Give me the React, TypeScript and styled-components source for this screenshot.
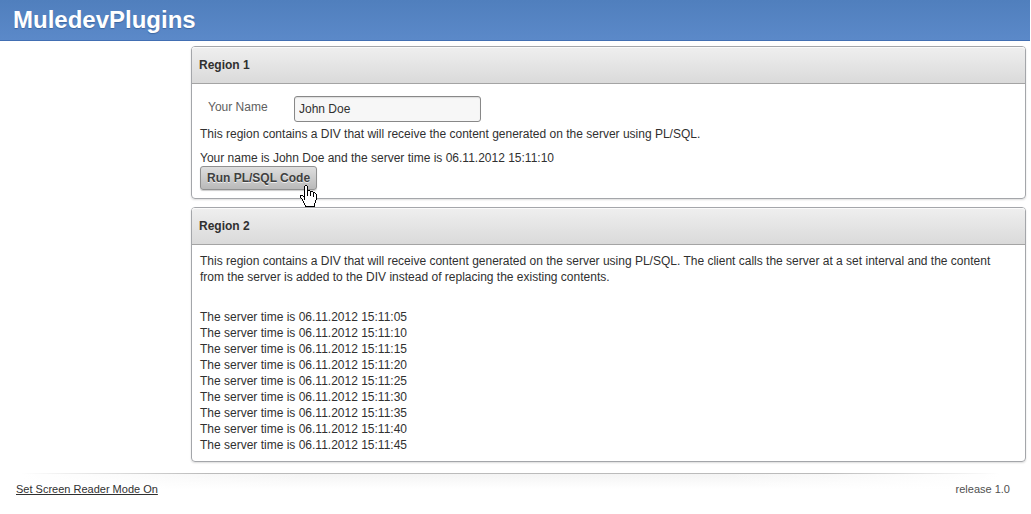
import React from "react";
import styled, { createGlobalStyle } from "styled-components";

const GlobalStyle = createGlobalStyle`
  *, *::before, *::after { box-sizing: border-box; }
  body {
    margin: 0;
    background: #fff;
    color: #303030;
    font: 12px/16px "Liberation Sans", Arial, sans-serif;
  }
  p, h1, h2, ul { margin: 0; padding: 0; }
`;

const Banner = styled.header`
  height: 41px;
  margin-right: 1px;
  padding: 6px 13px;
  background: linear-gradient(#507fbd, #5b89c9);
  border-bottom: 1px solid #426fb3;
`;

const Logo = styled.h1`
  color: #fff;
  font-size: 24px;
  line-height: 28px;
  text-shadow: 0 1px 1px #3c66a0;
`;

const Main = styled.main`
  display: flex;
  flex-direction: column;
  gap: 8px;
  margin: 5px 5px 0 191px;
`;

const Panel = styled.section`
  border: 1px solid #a4a6aa;
  border-radius: 4px;
  box-shadow: 0 1px 2px #dcdcdc;
`;

const PanelTitle = styled.h2`
  height: 37px;
  padding: 0 7px;
  border-bottom: 1px solid #a4a4a4;
  border-radius: 3px 3px 0 0;
  background: linear-gradient(#efefef, #dadada);
  box-shadow: inset 0 1px 0 #fafafa;
  font-size: 12px;
  line-height: 36px;
`;

const PanelBody = styled.div`
  padding: 8px;
`;

const Field = styled.div`
  display: flex;
  padding: 4px 8px;
`;

const Label = styled.label`
  width: 86px;
  padding-top: 3px;
  color: #606060;
`;

const TextInput = styled.input`
  width: 187px;
  height: 26px;
  padding: 0 4px;
  border: 1px solid #888;
  border-radius: 3px;
  background: #f7f7f7;
  box-shadow: inset 0 1px 1px #ddd;
  color: #303030;
  font: inherit;
`;

const Result = styled.p`
  padding-top: 8px;
`;

const RunButton = styled.button`
  display: block;
  position: relative;
  height: 24px;
  padding: 0 6px;
  border: 1px solid #909090;
  border-radius: 3px;
  background: linear-gradient(#dedede, #b9b9b9);
  box-shadow: 0 1px 1px #ccc;
  color: #404040;
  font: bold 12px/20px "Liberation Sans", Arial, sans-serif;
  text-shadow: 0 1px 0 #eee;
`;

const Pointer = styled.svg`
  position: absolute;
  top: 18px;
  right: -1px;
`;

const Log = styled.ul`
  padding-top: 24px;
  list-style: none;
`;

const Footer = styled.footer`
  position: relative;
  display: flex;
  justify-content: space-between;
  margin-top: 11px;
  padding: 8px 21px 8px 16px;
  font-size: 11px;
  background: linear-gradient(90deg, #fff 2%, transparent 30%, transparent 70%, #fff 97%),
    linear-gradient(#f3f3f3, #fff 16px);
`;

const FooterLine = styled.div`
  position: absolute;
  top: 0;
  left: 0;
  right: 0;
  height: 1px;
  background: linear-gradient(90deg, #fff 2%, #bbb 20%, #bbb 80%, #fff 97%);
`;

const FooterLink = styled.a`
  color: #303030;
`;

const Release = styled.span`
  color: #505050;
`;

const seconds = ["05", "10", "15", "20", "25", "30", "35", "40", "45"];

// One character per pixel: "#" outline, "o" fill.
const handRows = [
  "     ##",
  "    #oo#",
  "    #oo#",
  "    #oo#",
  "    #oo#",
  "    #oo###",
  "    #oo#oo###",
  "    #oo#oo#oo##",
  "    #oo#oo#oo#o#",
  "    #oo#oo#oo#oo#",
  "### #oo#oo#oo#oo#",
  "#oo##oooooooo#oo#",
  "#ooo#ooooooooooo#",
  " #oo#ooooooooooo#",
  "  #o#ooooooooooo#",
  "  #oooooooooooo#",
  "   #ooooooooooo#",
  "   #ooooooooooo#",
  "    #ooooooooo#",
  "    #ooooooooo#",
  "     #oooooooo#",
  "     ##########",
];

const pixels = (mark: string) =>
  handRows
    .flatMap((row, y) =>
      [...row].map((c, x) => (c === mark ? `M${x} ${y}h1v1h-1z` : ""))
    )
    .join("");

function HandPointer() {
  return (
    <Pointer
      width="17"
      height="22"
      viewBox="0 0 17 22"
      shapeRendering="crispEdges"
      aria-hidden="true"
    >
      <path d={pixels("o")} fill="#fff" />
      <path d={pixels("#")} fill="#000" />
    </Pointer>
  );
}

export default function App() {
  return (
    <>
      <GlobalStyle />
      <Banner>
        <Logo>MuledevPlugins</Logo>
      </Banner>
      <Main>
        <Panel>
          <PanelTitle>Region 1</PanelTitle>
          <PanelBody>
            <Field>
              <Label htmlFor="your-name">Your Name</Label>
              <TextInput id="your-name" type="text" defaultValue="John Doe" />
            </Field>
            <p>
              This region contains a DIV that will receive the content generated on the server
              using PL/SQL.
            </p>
            <Result>Your name is John Doe and the server time is 06.11.2012 15:11:10</Result>
            <RunButton type="button">
              Run PL/SQL Code
              <HandPointer />
            </RunButton>
          </PanelBody>
        </Panel>
        <Panel>
          <PanelTitle>Region 2</PanelTitle>
          <PanelBody>
            <p>
              This region contains a DIV that will receive content generated on the server using
              PL/SQL. The client calls the server at a set interval and the content from the
              server is added to the DIV instead of replacing the existing contents.
            </p>
            <Log>
              {seconds.map((s) => (
                <li key={s}>The server time is 06.11.2012 15:11:{s}</li>
              ))}
            </Log>
          </PanelBody>
        </Panel>
      </Main>
      <Footer>
        <FooterLine />
        <FooterLink href="#">Set Screen Reader Mode On</FooterLink>
        <Release>release 1.0</Release>
      </Footer>
    </>
  );
}
